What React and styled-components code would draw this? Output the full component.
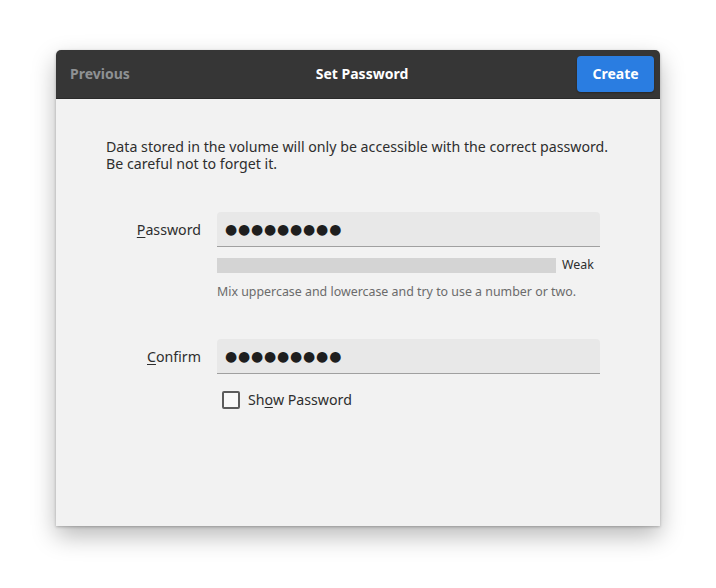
import React from 'react'
import styled, { createGlobalStyle } from 'styled-components'

const GlobalStyle = createGlobalStyle`
  html, body {
    margin: 0;
    padding: 0;
    background: #ffffff;
  }
  body {
    font-family: "Noto Sans", "Open Sans", sans-serif;
    color: #2e2e2e;
  }
`;

const Page = styled.div`
  width: 716px;
  height: 588px;
  padding: 50px 0 0 56px;
  box-sizing: border-box;
`;

const Window = styled.div`
  width: 604px;
  height: 476px;
  background: #f2f2f2;
  border-radius: 5px 5px 0 0;
  box-shadow: 0 10px 24px rgba(0, 0, 0, 0.28), 0 1px 3px rgba(0, 0, 0, 0.25);
  display: flex;
  flex-direction: column;
  overflow: hidden;
`;

const HeaderBar = styled.div`
  height: 48px;
  background: #363636;
  display: grid;
  grid-template-columns: 1fr auto 1fr;
  align-items: center;
  padding: 0 6px 0 14px;
  border-bottom: 1px solid #2a2a2a;
`;

const HeaderButton = styled.div`
  font-size: 14px;
  font-weight: 700;
  color: #8e9193;
  justify-self: start;
  padding-bottom: 2px;
`;

const Title = styled.div`
  font-size: 14px;
  font-weight: 700;
  color: #ffffff;
  padding-bottom: 2px;
`;

const PrimaryButton = styled.button`
  justify-self: end;
  width: 77px;
  height: 36px;
  border: none;
  border-radius: 4px;
  background: #2a7de1;
  color: #ffffff;
  font-family: inherit;
  font-size: 14px;
  font-weight: 700;
  padding: 0 0 2px;
  box-shadow: 0 1px 2px rgba(0, 0, 0, 0.3);
`;

const Content = styled.div`
  padding: 38px 0 0 50px;
  display: flex;
  flex-direction: column;
`;

const Intro = styled.p`
  margin: 0;
  font-size: 14.2px;
  line-height: 17px;
  color: #2e2e2e;
  padding-top: 1px;
`;

const FormGrid = styled.div`
  display: grid;
  grid-template-columns: 95px 383px;
  column-gap: 16px;
  margin-top: 40px;
`;

const Label = styled.label`
  font-size: 14.2px;
  color: #2e2e2e;
  text-align: right;
  height: 35px;
  line-height: 35px;
  margin-top: ${p => p.$top || 0}px;

  u {
    text-decoration: underline;
    text-underline-offset: 2px;
  }
`;

const FieldColumn = styled.div`
  display: flex;
  flex-direction: column;
  margin-top: ${p => p.$top || 0}px;
`;

const Entry = styled.div`
  height: 34px;
  background: #e8e8e8;
  border-bottom: 1px solid #a0a0a0;
  border-radius: 4px 4px 0 0;
  display: flex;
  align-items: center;
  padding-left: 8px;
  font-family: "DejaVu Sans", sans-serif;
  font-size: 14px;
  letter-spacing: 0.8px;
  color: #1e1e1e;
`;

const StrengthRow = styled.div`
  display: flex;
  align-items: center;
  gap: 6px;
  margin-top: 9px;
`;

const StrengthBar = styled.div`
  width: 339px;
  height: 15px;
  background: #d4d4d4;
`;

const StrengthText = styled.span`
  font-size: 12.4px;
  color: #2e2e2e;
  padding-bottom: 1px;
`;

const Hint = styled.div`
  font-size: 12.4px;
  color: #6b6b6b;
  margin-top: 9px;
`;

const CheckRow = styled.label`
  display: flex;
  align-items: center;
  gap: 8px;
  margin: 16px 0 0 5px;
  font-size: 14.2px;
  color: #2e2e2e;

  u {
    text-underline-offset: 2px;
  }
`;

const CheckBox = styled.span`
  width: 14px;
  height: 14px;
  border: 2px solid #5a5a5a;
  border-radius: 2px;
  background: #f7f7f7;
`;

export default function App() {
  return (
    <>
      <GlobalStyle />
      <Page>
        <Window>
          <HeaderBar>
            <HeaderButton>Previous</HeaderButton>
            <Title>Set Password</Title>
            <PrimaryButton>Create</PrimaryButton>
          </HeaderBar>
          <Content>
            <Intro>
              Data stored in the volume will only be accessible with the correct password.
              <br />
              Be careful not to forget it.
            </Intro>
            <FormGrid>
              <Label><u>P</u>assword</Label>
              <FieldColumn>
                <Entry>●●●●●●●●●</Entry>
                <StrengthRow>
                  <StrengthBar />
                  <StrengthText>Weak</StrengthText>
                </StrengthRow>
                <Hint>Mix uppercase and lowercase and try to use a number or two.</Hint>
              </FieldColumn>
              <Label $top={39}><u>C</u>onfirm</Label>
              <FieldColumn $top={39}>
                <Entry>●●●●●●●●●</Entry>
                <CheckRow>
                  <CheckBox />
                  <span>Sh<u>o</u>w Password</span>
                </CheckRow>
              </FieldColumn>
            </FormGrid>
          </Content>
        </Window>
      </Page>
    </>
  );
}
